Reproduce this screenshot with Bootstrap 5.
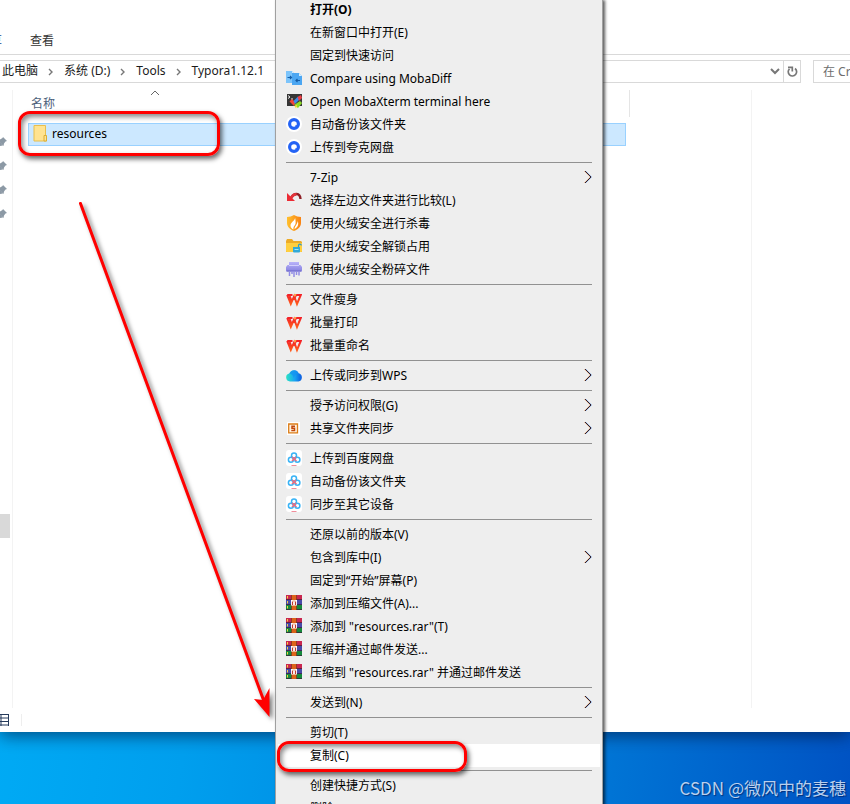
<!DOCTYPE html>
<html lang="zh-CN">
<head>
<meta charset="utf-8">
<meta name="viewport" content="width=device-width, initial-scale=1">
<title>Typora1.12.1</title>
<link href="https://cdn.jsdelivr.net/npm/bootstrap@5.3.0/dist/css/bootstrap.min.css" rel="stylesheet">
<style>
  body { font: 12px/16px "Noto Sans", "Noto Sans CJK SC", sans-serif; color: #000; background: linear-gradient(98deg, #00b0f8 0%, #009fee 30%, #0078d7 72%, #0053c4 100%); }
  .btn { font: inherit; }
  .explorer { background: #fff; box-shadow: 0 4px 16px rgba(0, 20, 60, .6); }
  .desktop-strip { height: 72px; }
  .ribbon { height: 55px; border-bottom: 1px solid #d9d9d9; padding: 27px 0 0; }
  .ribbon .btn { color: #333; }
  .ribbon .tab-cut { width: 2px; margin-right: 28px; color: #19478a; }
  .address { padding: 5px 0 7px; }
  .address-box { height: 23px; border: 1px solid #d9d9d9; border-left: 0; padding: 0 0 0 2px; }
  .address-box a { color: #1b1b1b; padding-bottom: 2px; }
  .crumb-sep { margin: 0 10px; }
  .icon-cell { width: 17px; height: 21px; }
  .refresh { border-left: 1px solid #d9d9d9 !important; }
  .search { width: 37px; height: 23px; margin-left: 12px; border: 1px solid #d9d9d9; border-right: 0; padding: 0 0 0 9px; color: #6d6d6d; font: inherit; background: #fff; }
  .search::placeholder { color: #6d6d6d; opacity: 1; }
  .sidebar { width: 13px; border-right: 1px solid #f3f3f3; padding-top: 47px; }
  .sidebar svg { display: block; margin-bottom: 14px; }
  .scroll-mark { width: 10px; height: 24px; background: #d9d9d9; margin-top: 295px; }
  .explorer-body { min-height: 0; }
  .files { padding-left: 15px; padding-right: 121px; }
  .preview { width: 99px; border-left: 1px solid #f3f3f3; }
  .file-table { table-layout: fixed; }
  .file-table th { height: 27px; font-weight: 400; color: #4c607a; padding: 1px 0 0 3px; vertical-align: middle; }
  .file-table th:first-child { width: 255px; }
  .file-table th:last-child { border-right: 1px solid #e5e5e5; }
  .file-table td { padding: 6px 4px 0 0; }
  .sort-caret { left: 119px; top: -3px; }
  .file-row { height: 23px; background: #cce8ff; border: 1px solid #99d1ff; padding: 0 0 2px 4px; gap: 4px; }
  .callout-ring { position: absolute; border: 3px solid #f00; border-radius: 12px; box-shadow: 2px 3px 5px rgba(0, 0, 0, .6), inset 2px 3px 5px rgba(0, 0, 0, .45); pointer-events: none; }
  .ring-file { left: -11px; top: -13px; width: 202px; height: 45px; }
  .ring-copy { left: -1px; top: -3px; width: 190px; height: 31px; z-index: 2; }
  .status { height: 24px; }
  .status-rule { width: 1px; height: 12px; background: #eee; margin-left: 12px; }
  .context { --bs-dropdown-font-size: 12px; left: 275px; top: -3px; width: 328px; padding: 0 2px; background: #eee; border: 1px solid #a0a0a0; border-radius: 0; color: #000; box-shadow: 2px 3px 3px rgba(0, 0, 0, .65); }
  .context .dropdown-item { display: flex; align-items: center; gap: 8px; height: 23px; padding: 0 8px; color: #000; position: relative; font-size: 12px; }
  .context .dropdown-item.chosen { background: #fff; }
  .context .dropdown-divider { margin: 3px 8px; border-top: 1px solid #919191; opacity: 1; }
  .pic { width: 16px; height: 16px; flex: none; margin-bottom: 2px; }
  .chev { width: 8px; height: 14px; margin: 0 0 2px auto; flex: none; }
  .trail { left: 70px; top: 195px; pointer-events: none; z-index: 1100; filter: drop-shadow(3px 3px 2px rgba(0, 0, 0, .5)); }
  .watermark { right: 4px; bottom: 4px; font: 17px/24px "Noto Sans CJK SC", sans-serif; color: #b9d0ee; text-shadow: 1px 1px 1px rgba(0, 20, 70, .6); }
</style>
<script src="https://cdn.jsdelivr.net/npm/bootstrap@5.3.0/dist/js/bootstrap.bundle.min.js"></script>
</head>
<body class="vh-100 overflow-hidden position-relative d-flex flex-column">

<svg class="position-absolute" width="0" height="0" aria-hidden="true">
  <defs>
    <linearGradient id="gCloud" x1="0" x2="1"><stop offset="0" stop-color="#2ce3c4"/><stop offset=".55" stop-color="#19a3f2"/><stop offset="1" stop-color="#0a5be0"/></linearGradient>
    <linearGradient id="gShield" x1="0" x2="1"><stop offset="0" stop-color="#ffc02e"/><stop offset="1" stop-color="#f98212"/></linearGradient>
    <linearGradient id="gShred" x1="0" x2="0" y1="0" y2="1"><stop offset="0" stop-color="#b9b3fa"/><stop offset="1" stop-color="#8681df"/></linearGradient>
    <linearGradient id="gW" x1="0" x2="0" y1="0" y2="1"><stop offset="0" stop-color="#f32128"/><stop offset="1" stop-color="#ff5a1c"/></linearGradient>
  </defs>
  <symbol id="i-none" viewBox="0 0 16 16"></symbol>
  <symbol id="i-diff" viewBox="0 0 16 16">
    <path d="M0 1h6l3 3v9H0z" fill="#7cc4fb"/><path d="M6 1l3 3H6z" fill="#d3ecff"/>
    <path d="M6 3h7l3 3v9H6z" fill="#4ba6f2"/><path d="M13 3l3 3h-3z" fill="#d3ecff"/>
    <path d="M1.500 7.500h4M4 6l1.500 1.500L4 9M14 10.500h-4M11.500 9L10 10.500l1.500 1.500" stroke="#135da8" stroke-width="1.200" fill="none"/>
  </symbol>
  <symbol id="i-moba" viewBox="0 0 16 16">
    <path d="M1 1h15v12H1z" fill="#353535"/><path d="M2 2.500l2 1.500-2 1.500M5 6h2" stroke="#eee" fill="none"/>
    <path d="M3.500 8.500L6 6l3.500 3.500L8 13z" fill="#f04438"/><path d="M7.500 8L12 3.500 14 6l-5 5z" fill="#3d8de8"/><path d="M11.500 4L15 2l1 3-3 3z" fill="#ee3d45"/>
    <path d="M8 12l6-4 2 2-4 5z" fill="#8bdc25"/><path d="M8.500 13l3-1.500-1.500 4z" fill="#ffd43b"/>
  </symbol>
  <symbol id="i-quark" viewBox="0 0 16 16">
    <circle cx="8" cy="8" r="8" fill="#fff"/><circle cx="8" cy="8" r="4.400" fill="none" stroke="#2463f5" stroke-width="3.200"/><path d="M9.500 9.500l2 1.500" stroke="#2463f5" stroke-width="1.600"/>
  </symbol>
  <symbol id="i-undo" viewBox="0 0 16 16">
    <path d="M5 6C8 .5 14 .5 14.500 7" fill="none" stroke="#8d1f26" stroke-width="2.400"/><path d="M5 6C7 2.500 9 2.200 10.500 2.500" fill="none" stroke="#e2343b" stroke-width="2.600"/><path d="M1 1v8h8z" fill="#ec2b34"/>
  </symbol>
  <symbol id="i-shield" viewBox="0 0 16 16">
    <path d="M8 0c2 1.300 4.500 1.800 7 2v6c0 4-3.500 6.800-7 8-3.500-1.200-7-4-7-8V2c2.500-.2 5-.7 7-2z" fill="url(#gShield)"/>
    <path d="M9 2.500c.5 3-4.500 4.500-4.500 8 0 2 1.500 3.500 3 4-.5-2 .3-3 1.500-4.500C10.300 8.500 9.500 5 9 2.500zM11.500 6c.5 3-3 5-3 8 2.500-1 5-4.500 3-8z" fill="#fff"/>
  </symbol>
  <symbol id="i-unlock" viewBox="0 0 16 16">
    <path d="M0 3l1-2h5l1.500 2H15l1 1v10H0z" fill="#edab27"/><path d="M0 5h16v8.500l-1 .5H1l-1-.5z" fill="#ffcf40"/>
    <path d="M7 9h7v4.500a1 1 0 0 1-1 1H8a1 1 0 0 1-1-1z" fill="#32a9d8"/><path d="M12.500 9V7.500a1.400 1.400 0 0 1 2.800 0" fill="none" stroke="#2d9ccb" stroke-width="1.200"/><path d="M8.500 11.500h4" stroke="#9ee7fa"/>
  </symbol>
  <symbol id="i-shred" viewBox="0 0 16 16">
    <path d="M3 1h10v3h1.500L16 6v4.500H0V6l1.500-2H3z" fill="url(#gShred)"/><path d="M3 4.500h10" stroke="#d2cefd"/><path d="M1 10h14" stroke="#6c68c6"/>
    <path d="M3.500 10v5M6 10v3M8 10v6M10.500 10v4M13 10v4.500" stroke="#918ce4" stroke-width="1.500"/>
  </symbol>
  <symbol id="i-wps" viewBox="0 0 16 16">
    <path d="M1.200 4H6.500M1.200 4L4.800 13 8.200 5.200 11 13 14.800 4H10L7.800 8.800M3.500 5L5.600 10" fill="none" stroke="url(#gW)" stroke-width="2"/>
    <path d="M8 3h2.500L9.500 5.500H8z" fill="#ffa24b"/>
  </symbol>
  <symbol id="i-cloud" viewBox="0 0 16 16">
    <path d="M4 14.500A4 4 0 0 1 3.300 6.600 5 5 0 0 1 12.600 6.300 4.200 4.200 0 0 1 12.500 14.500z" fill="url(#gCloud)"/><path d="M3.800 6A4.800 4.800 0 0 1 12.600 6.300C9.500 6.600 8.800 9.300 7.700 10.800 7 8.300 5.500 6.800 3.300 6.500z" fill="#1592f2" opacity=".75"/>
  </symbol>
  <symbol id="i-share" viewBox="0 0 16 16">
    <path d="M1 2h13v13H1z" fill="#fff"/><path d="M2.700 4h8.800v8.800H2.700z" fill="#fff3e0" stroke="#dc7d17" stroke-width="1.300"/>
    <path d="M9 6.200H6V8.300H8.500V10.600H5.300" fill="none" stroke="#c2480b" stroke-width="1.500"/>
  </symbol>
  <symbol id="i-baidu" viewBox="0 0 16 16">
    <rect width="16" height="16" rx="3" fill="#fff"/>
    <circle cx="8" cy="5.500" r="2.500" fill="none" stroke="#38b3f6" stroke-width="1.500"/>
    <circle cx="4.900" cy="9.700" r="2.500" fill="none" stroke="#38b3f6" stroke-width="1.500"/><circle cx="11.400" cy="9.700" r="2.500" fill="none" stroke="#38b3f6" stroke-width="1.500"/>
    <path d="M6 7l4.500 4M10 7l-4 4" stroke="#f4697b" stroke-width="1.500"/><path d="M5.500 15.500h5" stroke="#f08d9a"/>
  </symbol>
  <symbol id="i-rar" viewBox="0 0 16 16">
    <path d="M0 0h16v5H0z" fill="#c9264f"/><path d="M0 5h16v5H0z" fill="#474aa8"/><path d="M0 10h16v5H0z" fill="#15893b"/>
    <path d="M0 4.500h16M0 9.500h16M0 14.500h16" stroke="#3b1b3b" opacity=".7"/><path d="M1.500 1v2.500M1.500 6v2.500M1.500 11v2.500" stroke="#f4cf43"/>
    <path d="M5.500 0h5v15h-5z" fill="#dd631a"/><path d="M5.500 0v15M10.500 0v15" stroke="#69301b" stroke-width=".6"/>
    <path d="M5 5h6v5.500H5z" fill="#fff"/><path d="M6.500 10V6.500M9.500 10V6.500" fill="none" stroke="#bf3b2d" stroke-width="1.200"/><path d="M6.500 6h3" stroke="#e9a57c"/>
  </symbol>
  <symbol id="i-chev" viewBox="0 0 8 14">
    <path d="M.500 1l6 6-6 6" fill="none" stroke="#e3a06c"/><path d="M1.500 1l6 6-6 6" fill="none" stroke="#78a9e8"/><path d="M1 1l6 6-6 6" fill="none" stroke="#33202c"/>
  </symbol>
  <symbol id="i-pin" viewBox="0 0 8 10">
    <path d="M3 0l4 4-1.500.5L4 6.500 3.500 9 0 5.500V2.500L2.500 1z" fill="#8c99a5"/><path d="M0 5l3 3.500L0 9z" fill="#8c99a5"/>
  </symbol>
  <symbol id="i-sep" viewBox="0 0 6 8"><path d="M1 1l3 3-3 3" fill="none" stroke="#777" stroke-width="1.400"/></symbol>
</svg>

<main class="explorer flex-grow-1 d-flex flex-column">
  <nav class="ribbon d-flex align-items-center flex-shrink-0">
    <button class="tab-cut btn p-0 border-0 rounded-0 overflow-hidden d-flex justify-content-end text-nowrap" type="button">共享</button>
    <button class="btn p-0 border-0" type="button">查看</button>
  </nav>

  <div class="address d-flex flex-shrink-0">
    <div class="address-box d-flex align-items-center flex-grow-1">
      <a class="text-decoration-none" href="#">此电脑</a>
      <svg class="crumb-sep" width="6" height="8"><use href="#i-sep"/></svg>
      <a class="text-decoration-none" href="#">系统 (D:)</a>
      <svg class="crumb-sep" width="6" height="8"><use href="#i-sep"/></svg>
      <a class="text-decoration-none" href="#">Tools</a>
      <svg class="crumb-sep" width="6" height="8"><use href="#i-sep"/></svg>
      <a class="text-decoration-none" href="#">Typora1.12.1</a>
      <button class="icon-cell btn p-0 border-0 rounded-0 ms-auto d-flex align-items-center justify-content-center" type="button" aria-label="历史记录">
        <svg width="10" height="7"><path d="M1 1l4 4 4-4" fill="none" stroke="#777" stroke-width="2"/></svg>
      </button>
      <button class="icon-cell refresh btn p-0 border-0 rounded-0 d-flex align-items-center justify-content-center" type="button" aria-label="刷新">
        <svg width="12" height="12" viewBox="0 0 12 12"><path d="M9 2.500A4.200 4.200 0 1 1 3.500 2.800" fill="none" stroke="#777" stroke-width="1.700"/><path d="M2 1.300h4.300V5.500" fill="none" stroke="#777" stroke-width="1.700"/></svg>
      </button>
    </div>
    <input class="search rounded-0" type="text" placeholder="在 Cracked 中搜索" aria-label="搜索">
  </div>

  <div class="explorer-body d-flex flex-grow-1">
    <aside class="sidebar flex-shrink-0">
      <svg width="8" height="10"><use href="#i-pin"/></svg>
      <svg width="8" height="10"><use href="#i-pin"/></svg>
      <svg width="8" height="10"><use href="#i-pin"/></svg>
      <svg width="8" height="10"><use href="#i-pin"/></svg>
      <div class="scroll-mark"></div>
    </aside>
    <section class="files flex-grow-1">
      <table class="file-table w-100">
        <thead>
          <tr>
            <th scope="col"><div class="position-relative">名称
              <svg class="sort-caret position-absolute translate-middle-y" width="10" height="6"><path d="M1 5l4-4 4 4" fill="none" stroke="#666"/></svg></div></th>
            <th scope="col"></th>
          </tr>
        </thead>
        <tbody>
          <tr>
            <td colspan="2">
              <div class="file-row d-flex align-items-center position-relative">
                <svg width="15" height="17" viewBox="0 0 15 17"><path d="M1 .5h11.500v10l1 .5v5H1z" fill="#ffe391" stroke="#e8bf4d"/><path d="M11 10.500h2.500V16H11z" fill="#ffe391" stroke="#dcae35"/></svg>
                <span>resources</span>
                <span class="callout-ring ring-file"></span>
              </div>
            </td>
          </tr>
        </tbody>
      </table>
    </section>
    <aside class="preview flex-shrink-0"></aside>
  </div>

  <footer class="status d-flex align-items-center flex-shrink-0">
    <svg width="9" height="12"><path d="M0 .500h9M0 4h9M0 7.500h9M0 11h9M1 0v12M8.500 0v12" fill="none" stroke="#263b5c"/></svg>
    <span class="status-rule"></span>
  </footer>
</main>
<div class="desktop-strip flex-shrink-0"></div>
<div class="watermark position-absolute">CSDN @微风中的麦穗</div>

<ul class="context dropdown-menu show">
  <li><button class="dropdown-item fw-bold" type="button"><svg class="pic"><use href="#i-none"/></svg>打开(O)</button></li>
  <li><button class="dropdown-item" type="button"><svg class="pic"><use href="#i-none"/></svg>在新窗口中打开(E)</button></li>
  <li><button class="dropdown-item" type="button"><svg class="pic"><use href="#i-none"/></svg>固定到快速访问</button></li>
  <li><button class="dropdown-item" type="button"><svg class="pic"><use href="#i-diff"/></svg>Compare using MobaDiff</button></li>
  <li><button class="dropdown-item" type="button"><svg class="pic"><use href="#i-moba"/></svg>Open MobaXterm terminal here</button></li>
  <li><button class="dropdown-item" type="button"><svg class="pic"><use href="#i-quark"/></svg>自动备份该文件夹</button></li>
  <li><button class="dropdown-item" type="button"><svg class="pic"><use href="#i-quark"/></svg>上传到夸克网盘</button></li>
  <li><hr class="dropdown-divider"></li>
  <li><button class="dropdown-item" type="button"><svg class="pic"><use href="#i-none"/></svg>7-Zip<svg class="chev"><use href="#i-chev"/></svg></button></li>
  <li><button class="dropdown-item" type="button"><svg class="pic"><use href="#i-undo"/></svg>选择左边文件夹进行比较(L)</button></li>
  <li><button class="dropdown-item" type="button"><svg class="pic"><use href="#i-shield"/></svg>使用火绒安全进行杀毒</button></li>
  <li><button class="dropdown-item" type="button"><svg class="pic"><use href="#i-unlock"/></svg>使用火绒安全解锁占用</button></li>
  <li><button class="dropdown-item" type="button"><svg class="pic"><use href="#i-shred"/></svg>使用火绒安全粉碎文件</button></li>
  <li><hr class="dropdown-divider"></li>
  <li><button class="dropdown-item" type="button"><svg class="pic"><use href="#i-wps"/></svg>文件瘦身</button></li>
  <li><button class="dropdown-item" type="button"><svg class="pic"><use href="#i-wps"/></svg>批量打印</button></li>
  <li><button class="dropdown-item" type="button"><svg class="pic"><use href="#i-wps"/></svg>批量重命名</button></li>
  <li><hr class="dropdown-divider"></li>
  <li><button class="dropdown-item" type="button"><svg class="pic"><use href="#i-cloud"/></svg>上传或同步到WPS<svg class="chev"><use href="#i-chev"/></svg></button></li>
  <li><hr class="dropdown-divider"></li>
  <li><button class="dropdown-item" type="button"><svg class="pic"><use href="#i-none"/></svg>授予访问权限(G)<svg class="chev"><use href="#i-chev"/></svg></button></li>
  <li><button class="dropdown-item" type="button"><svg class="pic"><use href="#i-share"/></svg>共享文件夹同步<svg class="chev"><use href="#i-chev"/></svg></button></li>
  <li><hr class="dropdown-divider"></li>
  <li><button class="dropdown-item" type="button"><svg class="pic"><use href="#i-baidu"/></svg>上传到百度网盘</button></li>
  <li><button class="dropdown-item" type="button"><svg class="pic"><use href="#i-baidu"/></svg>自动备份该文件夹</button></li>
  <li><button class="dropdown-item" type="button"><svg class="pic"><use href="#i-baidu"/></svg>同步至其它设备</button></li>
  <li><hr class="dropdown-divider"></li>
  <li><button class="dropdown-item" type="button"><svg class="pic"><use href="#i-none"/></svg>还原以前的版本(V)</button></li>
  <li><button class="dropdown-item" type="button"><svg class="pic"><use href="#i-none"/></svg>包含到库中(I)<svg class="chev"><use href="#i-chev"/></svg></button></li>
  <li><button class="dropdown-item" type="button"><svg class="pic"><use href="#i-none"/></svg>固定到“开始”屏幕(P)</button></li>
  <li><button class="dropdown-item" type="button"><svg class="pic"><use href="#i-rar"/></svg>添加到压缩文件(A)...</button></li>
  <li><button class="dropdown-item" type="button"><svg class="pic"><use href="#i-rar"/></svg>添加到 "resources.rar"(T)</button></li>
  <li><button class="dropdown-item" type="button"><svg class="pic"><use href="#i-rar"/></svg>压缩并通过邮件发送...</button></li>
  <li><button class="dropdown-item" type="button"><svg class="pic"><use href="#i-rar"/></svg>压缩到 "resources.rar" 并通过邮件发送</button></li>
  <li><hr class="dropdown-divider"></li>
  <li><button class="dropdown-item" type="button"><svg class="pic"><use href="#i-none"/></svg>发送到(N)<svg class="chev"><use href="#i-chev"/></svg></button></li>
  <li><hr class="dropdown-divider"></li>
  <li><button class="dropdown-item" type="button"><svg class="pic"><use href="#i-none"/></svg>剪切(T)</button></li>
  <li><button class="dropdown-item chosen" type="button"><svg class="pic"><use href="#i-none"/></svg>复制(C)<span class="callout-ring ring-copy"></span></button></li>
  <li><hr class="dropdown-divider"></li>
  <li><button class="dropdown-item" type="button"><svg class="pic"><use href="#i-none"/></svg>创建快捷方式(S)</button></li>
  <li><button class="dropdown-item" type="button"><svg class="pic"><use href="#i-none"/></svg>删除(D)</button></li>
</ul>

<svg class="trail position-absolute" width="210" height="530" aria-hidden="true">
  <path d="M10.500 8.500L195 509" stroke="#f00" stroke-width="3" stroke-linecap="round"/>
  <path d="M199.500 522L184 504l9 1 6.500-12z" fill="#f00"/>
</svg>
</body>
</html>
